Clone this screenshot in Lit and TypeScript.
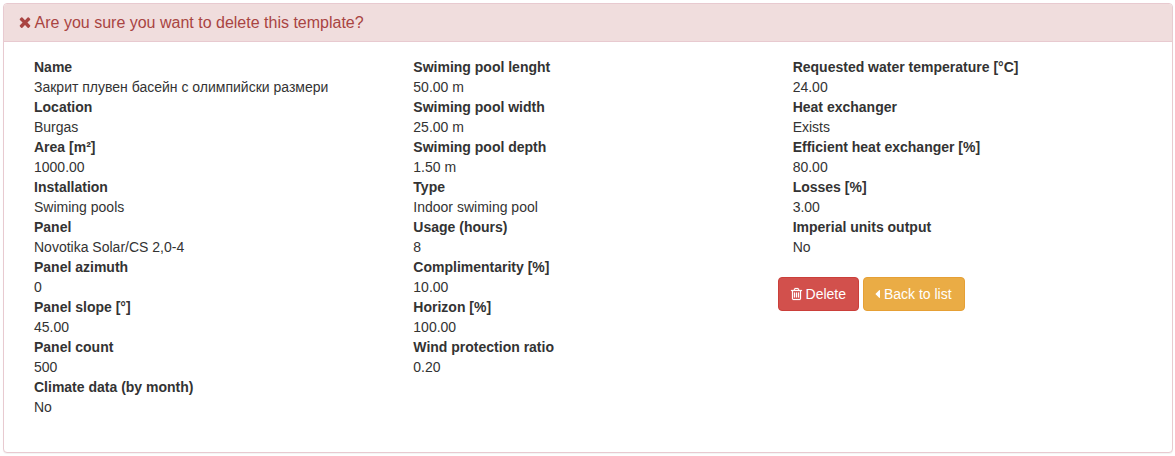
import { LitElement, html, css, svg } from "lit";
import { customElement } from "lit/decorators.js";

type Field = [label: string, value: string];

const COLUMNS: Field[][] = [
  [
    ["Name", "Закрит плувен басейн с олимпийски размери"],
    ["Location", "Burgas"],
    ["Area [m²]", "1000.00"],
    ["Installation", "Swiming pools"],
    ["Panel", "Novotika Solar/CS 2,0-4"],
    ["Panel azimuth", "0"],
    ["Panel slope [°]", "45.00"],
    ["Panel count", "500"],
    ["Climate data (by month)", "No"],
  ],
  [
    ["Swiming pool lenght", "50.00 m"],
    ["Swiming pool width", "25.00 m"],
    ["Swiming pool depth", "1.50 m"],
    ["Type", "Indoor swiming pool"],
    ["Usage (hours)", "8"],
    ["Complimentarity [%]", "10.00"],
    ["Horizon [%]", "100.00"],
    ["Wind protection ratio", "0.20"],
  ],
  [
    ["Requested water temperature [°C]", "24.00"],
    ["Heat exchanger", "Exists"],
    ["Efficient heat exchanger [%]", "80.00"],
    ["Losses [%]", "3.00"],
    ["Imperial units output", "No"],
  ],
];

const timesPath = svg`<path d="M1490 1322q0 40-28 68l-136 136q-28 28-68 28t-68-28l-294-294-294 294q-28 28-68 28t-68-28l-136-136q-28-28-28-68t28-68l294-294-294-294q-28-28-28-68t28-68l136-136q28-28 68-28t68 28l294 294 294-294q28-28 68-28t68 28l136 136q28 28 28 68t-28 68l-294 294 294 294q28 28 28 68z"/>`;
const trashPath = svg`<path d="M704 736v576q0 14-9 23t-23 9h-64q-14 0-23-9t-9-23v-576q0-14 9-23t23-9h64q14 0 23 9t9 23zm256 0v576q0 14-9 23t-23 9h-64q-14 0-23-9t-9-23v-576q0-14 9-23t23-9h64q14 0 23 9t9 23zm256 0v576q0 14-9 23t-23 9h-64q-14 0-23-9t-9-23v-576q0-14 9-23t23-9h64q14 0 23 9t9 23zm128 724v-948h-896v948q0 22 7 40.5t14.5 27 10.5 8.5h832q3 0 10.5-8.5t14.5-27 7-40.5zm-672-1076h448l-48-117q-7-9-17-11h-317q-10 2-17 11zm928 32v64q0 14-9 23t-23 9h-96v948q0 83-47 143.5t-113 60.5h-832q-66 0-113-58.5t-47-141.5v-952h-96q-14 0-23-9t-9-23v-64q0-14 9-23t23-9h309l70-167q15-37 54-63t79-26h320q40 0 79 26t54 63l70 167h309q14 0 23 9t9 23z"/>`;
const caretPath = svg`<path d="M1216 448v896q0 26-19 45t-45 19-45-19l-448-448q-19-19-19-45t19-45l448-448q19-19 45-19t45 19 19 45z"/>`;

@customElement("app-root")
export class AppRoot extends LitElement {
  static styles = css`
    :host {
      display: block;
      padding: 3px 2px 2px 3px;
      font: 14px/20px "Liberation Sans", Arial, sans-serif;
      color: #333;
    }
    .panel {
      border: 1px solid #e8cad0;
      border-radius: 4px;
      background: #fff;
      box-shadow: 0 1px 1px rgba(0, 0, 0, 0.05);
    }
    .heading {
      padding: 10px 15px;
      border-bottom: 1px solid #e8cad0;
      border-radius: 3px 3px 0 0;
      background: #f0dddd;
      color: #a94442;
    }
    .title {
      margin: 0;
      font-size: 16px;
      font-weight: 400;
      line-height: 17px;
    }
    .body {
      display: grid;
      grid-template-columns: repeat(3, minmax(0, 1fr));
      padding: 15px;
    }
    .fields {
      margin: 0 0 20px;
      padding: 0 15px;
    }
    .label {
      font-weight: 700;
    }
    .value {
      margin: 0;
    }
    .actions {
      display: flex;
      gap: 4px;
    }
    .btn {
      padding: 6px 12px;
      border: 1px solid;
      border-radius: 4px;
      color: #fff;
      font: inherit;
      text-decoration: none;
      white-space: nowrap;
      cursor: pointer;
    }
    .danger {
      background: #d2504c;
      border-color: #cb3f3a;
    }
    .warning {
      background: #eaac45;
      border-color: #e6a035;
    }
    .icon {
      fill: currentColor;
      overflow: visible;
    }
    .times {
      width: 12px;
      height: 16px;
      vertical-align: -2px;
    }
    .trash {
      width: 11px;
      height: 14px;
      vertical-align: -2px;
      stroke: currentColor;
      stroke-width: 30px;
    }
    .caret {
      width: 4px;
      height: 14px;
      vertical-align: -2px;
    }
  `;

  private renderFields(fields: Field[]) {
    return html`<dl class="fields">
      ${fields.map(
        ([label, value]) => html`<dt class="label">${label}</dt>
          <dd class="value">${value}</dd>`
      )}
    </dl>`;
  }

  render() {
    return html`
      <section class="panel" aria-labelledby="title">
        <header class="heading">
          <h3 class="title" id="title"><svg class="icon times" viewBox="224 0 1344 1792" aria-hidden="true">${timesPath}</svg> Are you sure you want to delete this template?</h3>
        </header>
        <div class="body">
          <div>${this.renderFields(COLUMNS[0])}</div>
          <div>${this.renderFields(COLUMNS[1])}</div>
          <div>
            ${this.renderFields(COLUMNS[2])}
            <div class="actions">
              <button class="btn danger" type="button"><svg class="icon trash" viewBox="192 0 1408 1792" aria-hidden="true">${trashPath}</svg> Delete</button>
              <a class="btn warning" href="#"><svg class="icon caret" viewBox="704 0 512 1792" aria-hidden="true">${caretPath}</svg> Back to list</a>
            </div>
          </div>
        </div>
      </section>
    `;
  }
}
